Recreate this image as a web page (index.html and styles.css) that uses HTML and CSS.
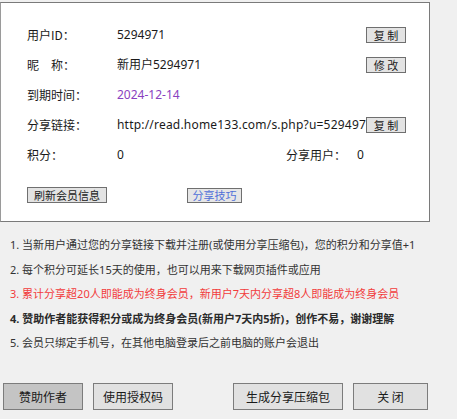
FILE: index.html
```html
<!DOCTYPE html>
<html lang="zh-CN">
<head>
<meta charset="utf-8">
<title>会员信息</title>
<link rel="stylesheet" href="styles.css">
</head>
<body>
<div class="panel">
  <div class="row">
    <span class="label">用户ID：</span>
    <span class="value">5294971</span>
    <button class="btn-sm">复 制</button>
  </div>
  <div class="row">
    <span class="label">昵&emsp;称：</span>
    <span class="value">新用户5294971</span>
    <button class="btn-sm">修 改</button>
  </div>
  <div class="row">
    <span class="label">到期时间：</span>
    <span class="value date">2024-12-14</span>
  </div>
  <div class="row">
    <span class="label">分享链接：</span>
    <span class="value url">http://read.home133.com/s.php?u=5294971</span>
    <button class="btn-sm">复 制</button>
  </div>
  <div class="row">
    <span class="label">积分：</span>
    <span class="value short">0</span>
    <span class="label2">分享用户：</span>
    <span>0</span>
  </div>
  <div class="actions">
    <button class="btn-refresh">刷新会员信息</button>
    <button class="btn-tips">分享技巧</button>
  </div>
</div>
<ol class="notes">
  <li>1. 当新用户通过您的分享链接下载并注册(或使用分享压缩包)，您的积分和分享值+1</li>
  <li>2. 每个积分可延长15天的使用，也可以用来下载网页插件或应用</li>
  <li class="red">3. 累计分享超20人即能成为终身会员，新用户7天内分享超8人即能成为终身会员</li>
  <li class="bold">4. 赞助作者能获得积分或成为终身会员(新用户7天内5折)，创作不易，谢谢理解</li>
  <li>5. 会员只绑定手机号，在其他电脑登录后之前电脑的账户会退出</li>
</ol>
<div class="footer">
  <button class="btn btn-sponsor">赞助作者</button>
  <button class="btn btn-code">使用授权码</button>
  <button class="btn btn-pack">生成分享压缩包</button>
  <button class="btn btn-close">关 闭</button>
</div>
</body>
</html>
```
FILE: styles.css
```css
html, body {
  margin: 0;
  padding: 0;
}
body {
  width: 457px;
  height: 419px;
  overflow: hidden;
  background: #f0f0f0;
  font-family: "Noto Sans", "Noto Sans CJK SC", sans-serif;
  font-size: 12px;
  color: #1a1a1a;
}
button {
  font-family: "Noto Sans CJK SC", "Noto Sans", sans-serif;
  padding: 0;
  margin: 0;
  cursor: default;
}
.panel {
  box-sizing: border-box;
  margin-top: 2px;
  width: 430px;
  height: 220px;
  border: 1px solid #7a7a7a;
  border-left-color: #9a9a9a;
  background: #ffffff;
  padding: 17px 0 0 26px;
}
.row {
  display: flex;
  align-items: center;
  height: 30px;
  line-height: 16px;
}
.label {
  width: 90px;
  flex: none;
  font-family: "Noto Sans CJK SC", sans-serif;
}
.value {
  width: 249px;
  flex: none;
  white-space: nowrap;
  overflow: hidden;
}
.value.url {
  letter-spacing: 0.2px;
}
.value.short {
  width: 169px;
}
.label2 {
  width: 71px;
  flex: none;
  font-family: "Noto Sans CJK SC", sans-serif;
}
.date {
  color: #8a3fc0;
}
.btn-sm {
  box-sizing: border-box;
  width: 40px;
  height: 16px;
  flex: none;
  border: 1px solid #6f6f6f;
  background: #e3e3e3;
  font-size: 11px;
  line-height: 13px;
  color: #1a1a1a;
}
.actions {
  display: flex;
  align-items: center;
  margin-top: 17px;
  height: 16px;
}
.btn-refresh {
  box-sizing: border-box;
  width: 80px;
  height: 16px;
  border: 1px solid #707070;
  background: #e3e3e3;
  font-size: 11px;
  line-height: 13px;
  color: #1a1a1a;
}
.btn-tips {
  box-sizing: border-box;
  width: 55px;
  height: 15px;
  margin-left: 80px;
  border: 1px solid #6f6f6f;
  background: #e6e6e6;
  font-size: 11px;
  line-height: 12px;
  color: #4f6fd8;
}
.notes {
  list-style: none;
  margin: 11px 0 0 0;
  padding: 0 0 0 10px;
  font-family: "Noto Sans", "Noto Sans CJK SC", sans-serif;
  font-size: 11px;
  line-height: 24.5px;
  color: #333333;
  white-space: nowrap;
}
.notes .red {
  color: #f23c3c;
}
.notes .bold {
  font-weight: bold;
  color: #2a2a2a;
}
.footer {
  display: flex;
  margin-top: 27px;
  padding-left: 3px;
}
.btn {
  box-sizing: border-box;
  height: 27px;
  border: 1px solid #7c7c7c;
  background: #e1e1e1;
  font-size: 12px;
  color: #1a1a1a;
}
.btn-sponsor {
  width: 80px;
  background: #c4c4c4;
}
.btn-code {
  width: 80px;
  margin-left: 10px;
}
.btn-pack {
  width: 110px;
  margin-left: 60px;
}
.btn-close {
  width: 75px;
  margin-left: 10px;
}
```
